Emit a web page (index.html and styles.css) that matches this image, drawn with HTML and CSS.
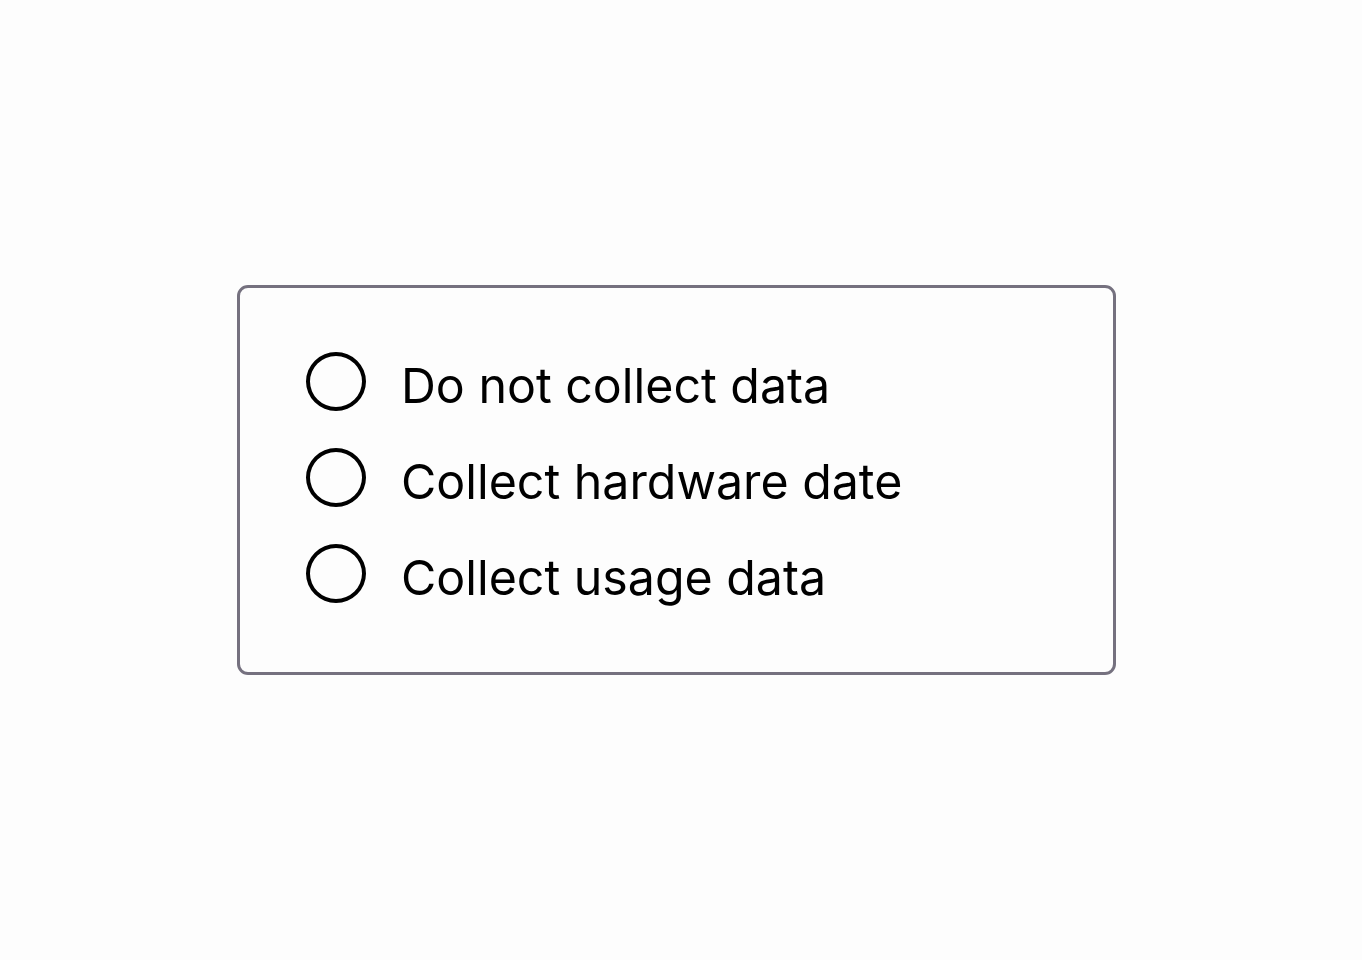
FILE: index.html
```html
<!DOCTYPE html>
<html lang="en">
<head>
<meta charset="utf-8">
<title>Data collection</title>
<link rel="stylesheet" href="styles.css">
</head>
<body>
<div class="card">
  <label class="option"><span class="radio"></span><span class="label">Do not collect data</span></label>
  <label class="option"><span class="radio"></span><span class="label">Collect hardware date</span></label>
  <label class="option"><span class="radio"></span><span class="label">Collect usage data</span></label>
</div>
</body>
</html>
```
FILE: styles.css
```css
html, body {
  margin: 0;
  padding: 0;
  background: #fdfdfd;
}
body {
  padding: 285px 0 0 237px;
  font-family: Inter, "Noto Sans", sans-serif;
}
.card {
  box-sizing: border-box;
  width: 879px;
  height: 390px;
  border: 3px solid #75717f;
  border-radius: 11px;
  padding: 64px 64px 0 66px;
  display: flex;
  flex-direction: column;
  gap: 37px;
}
.option {
  display: flex;
  align-items: center;
  gap: 35px;
  height: 59px;
}
.radio {
  box-sizing: border-box;
  width: 60px;
  height: 59px;
  flex: none;
  border: 4px solid #000;
  border-radius: 50%;
}
.label {
  font-size: 48.3px;
  line-height: 59px;
  color: #000;
  position: relative;
  top: 4px;
}
```
